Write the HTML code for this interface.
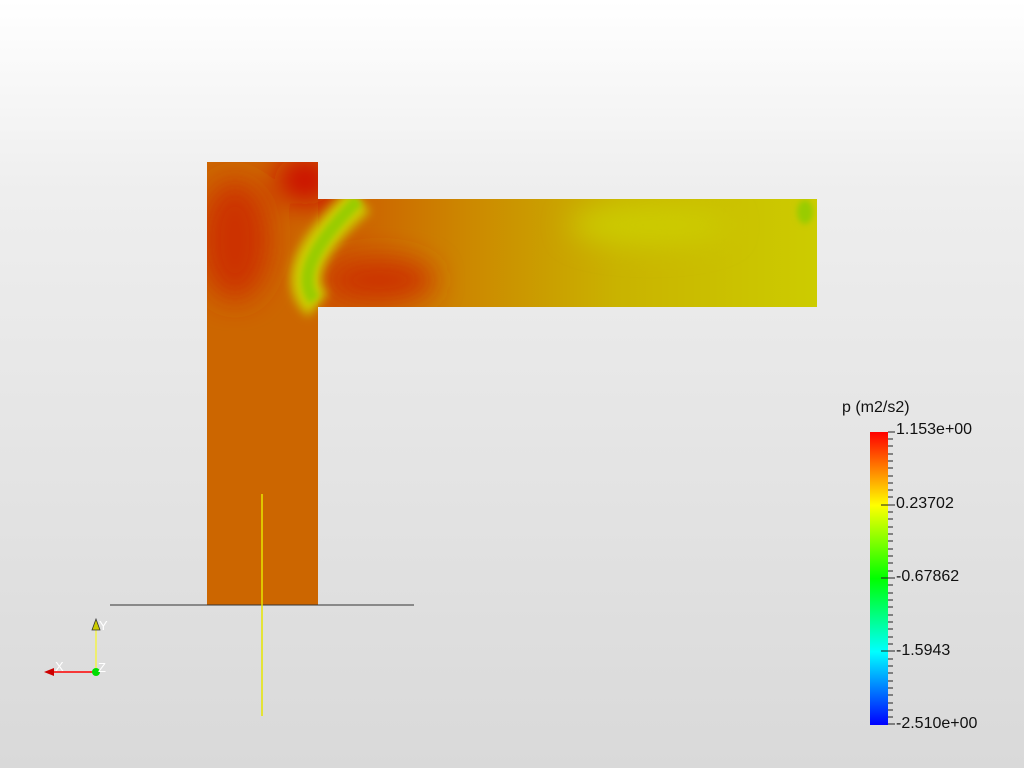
<!DOCTYPE html>
<html><head><style>
html,body{margin:0;padding:0}
body{width:1024px;height:768px;overflow:hidden;background:linear-gradient(#ffffff 0%,#eeeeee 25%,#d9d9d9 100%);font-family:"Liberation Sans",sans-serif;position:relative}
.t{position:absolute;font-size:16px;color:#111;white-space:nowrap}
</style></head><body>
<svg width="1024" height="768" style="position:absolute;left:0;top:0">
<defs>
<filter id="b1" x="-50%" y="-50%" width="200%" height="200%"><feGaussianBlur stdDeviation="14"/></filter>
<filter id="b2" x="-50%" y="-50%" width="200%" height="200%"><feGaussianBlur stdDeviation="5"/></filter>
<filter id="b3" x="-50%" y="-50%" width="200%" height="200%"><feGaussianBlur stdDeviation="3"/></filter>
<clipPath id="c"><path d="M207 162H318V199H817V307H318V605H207Z"/></clipPath>
<linearGradient id="hg" x1="0" x2="1" y1="0" y2="0">
<stop offset="0" stop-color="#cc5500"/><stop offset="0.3" stop-color="#cc8800"/><stop offset="0.6" stop-color="#c9b300"/><stop offset="1" stop-color="#cccc00"/></linearGradient>
<linearGradient id="cb" x1="0" y1="0" x2="0" y2="1">
<stop offset="0" stop-color="#ff0000"/><stop offset="0.25" stop-color="#ffff00"/><stop offset="0.5" stop-color="#00ff00"/><stop offset="0.75" stop-color="#00ffff"/><stop offset="1" stop-color="#0000ff"/></linearGradient>
</defs>
<g clip-path="url(#c)">
<rect x="207" y="162" width="111" height="443" fill="#cc6600"/>
<rect x="318" y="199" width="499" height="108" fill="url(#hg)"/>
<g filter="url(#b1)">
<ellipse cx="235" cy="240" rx="35" ry="60" fill="#cc3300"/>
<ellipse cx="305" cy="180" rx="30" ry="25" fill="#cc1100"/>
<ellipse cx="380" cy="280" rx="55" ry="22" fill="#cc3300"/>
<ellipse cx="650" cy="225" rx="80" ry="20" fill="#cccc00"/>
</g>
<g filter="url(#b2)">
<path d="M318 305 C290 280 315 240 360 200" fill="none" stroke="#cccc00" stroke-width="30"/>
</g>
<g filter="url(#b3)">
<path d="M314 300 C296 275 318 240 358 200" fill="none" stroke="#99cc00" stroke-width="12"/>
<ellipse cx="805" cy="212" rx="8" ry="12" fill="#99cc00"/>
</g>
</g>
<line x1="110" y1="605" x2="414" y2="605" stroke="#333" stroke-width="1"/>
<line x1="262" y1="494" x2="262" y2="716" stroke="#e6e600" stroke-width="1.5"/>
<line x1="96" y1="672" x2="96" y2="628" stroke="#ffff00" stroke-width="1"/>
<polygon points="96,619 92,630 100,630" fill="#cccc00" stroke="#333" stroke-width="0.8"/>
<line x1="96" y1="672" x2="52" y2="672" stroke="#ff0000" stroke-width="1.5"/>
<polygon points="44,672 54,668 54,676" fill="#cc0000"/>
<circle cx="96" cy="672" r="4" fill="#00dd00"/>
<text x="99" y="630" fill="#fff" font-size="13" font-family="Liberation Sans">Y</text>
<text x="55" y="671" fill="#fff" font-size="13" font-family="Liberation Sans">X</text>
<text x="98" y="672" fill="#fff" font-size="13" font-family="Liberation Sans">Z</text>
<rect x="870" y="432" width="18" height="293" fill="url(#cb)"/>
<g stroke="#222" stroke-width="1">
<path d="M888 432h7M888 439h5M888 446h5M888 454h5M888 461h5M888 468h5M888 476h5M888 483h5M888 490h5M888 497h5M881 505h14M888 512h5M888 519h5M888 527h5M888 534h5M888 541h5M888 549h5M888 556h5M888 563h5M888 571h5M881 578h14M888 585h5M888 593h5M888 600h5M888 607h5M888 615h5M888 622h5M888 629h5M888 637h5M888 644h5M881 651h14M888 659h5M888 666h5M888 673h5M888 681h5M888 688h5M888 695h5M888 703h5M888 710h5M888 717h5M888 724h7"/>
</g>
</svg>
<div class="t" style="left:842px;top:399px">p (m2/s2)</div>
<div class="t" style="left:896px;top:421px">1.153e+00</div>
<div class="t" style="left:896px;top:495px">0.23702</div>
<div class="t" style="left:896px;top:568px">-0.67862</div>
<div class="t" style="left:896px;top:642px">-1.5943</div>
<div class="t" style="left:896px;top:715px">-2.510e+00</div>
</body></html>
